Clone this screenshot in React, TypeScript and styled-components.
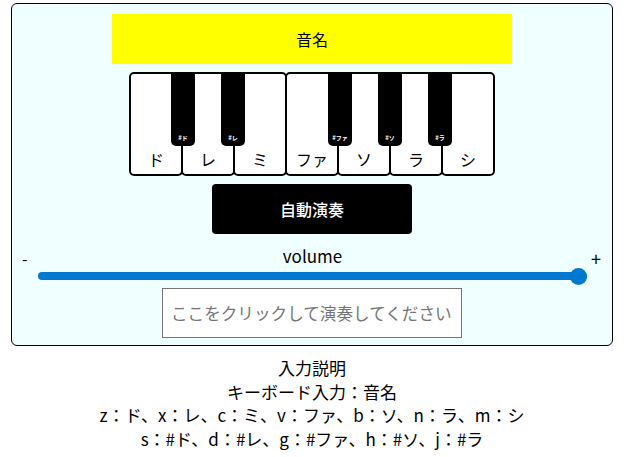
import React, { useState } from 'react'
import styled, { createGlobalStyle } from 'styled-components'

const GlobalStyle = createGlobalStyle`
  body {
    margin: 0;
    font-family: "Noto Sans CJK JP", "Noto Sans", sans-serif;
    color: #000;
    background: #fff;
  }
`

const Page = styled.div`
  padding: 3px 0 0 11px;
`

const Panel = styled.div`
  box-sizing: border-box;
  width: 602px;
  height: 343px;
  border: 1px solid #000;
  border-radius: 6px;
  background: #f0ffff;
  display: flex;
  flex-direction: column;
  align-items: center;
  padding-top: 10px;
`

const NoteName = styled.div`
  width: 400px;
  height: 50px;
  background: #ffff00;
  display: flex;
  align-items: center;
  justify-content: center;
  font-size: 16px;
`

const Keyboard = styled.div`
  position: relative;
  display: flex;
  margin-top: 8px;
  height: 104px;
`

const WhiteKey = styled.div`
  box-sizing: border-box;
  width: 54px;
  height: 104px;
  border: 2px solid #000;
  border-radius: 5px;
  background: #fff;
  display: flex;
  align-items: flex-end;
  justify-content: center;
  padding-bottom: 3px;
  font-size: 16px;
  & + & {
    margin-left: -2px;
  }
`

const BlackKey = styled.div<{ $left: number }>`
  position: absolute;
  top: 0;
  left: ${(p) => p.$left}px;
  width: 24px;
  height: 74px;
  background: #000;
  border-radius: 0 0 5px 5px;
  display: flex;
  align-items: flex-end;
  justify-content: center;
  padding-bottom: 4px;
  box-sizing: border-box;
  color: #fff;
  font-size: 6px;
  font-weight: bold;
`

const AutoButton = styled.button`
  margin-top: 8px;
  width: 200px;
  height: 50px;
  border: none;
  border-radius: 4px;
  background: #000;
  color: #fff;
  font-family: "Noto Sans CJK JP", sans-serif;
  font-size: 16px;
  font-weight: 500;
`

const VolumeRow = styled.div`
  align-self: stretch;
  margin-top: 10px;
  padding-left: 10px;
  display: flex;
  align-items: flex-start;
`

const Sign = styled.span<{ $plus?: boolean }>`
  width: ${(p) => (p.$plus ? 18 : 16)}px;
  margin-top: 4px;
  text-align: ${(p) => (p.$plus ? 'center' : 'left')};
  font-size: ${(p) => (p.$plus ? 18 : 16)}px;
  line-height: 20px;
`

const VolumeCol = styled.div`
  width: 549px;
  display: flex;
  flex-direction: column;
  align-items: center;
`

const VolumeLabel = styled.div`
  font-size: 17px;
  line-height: 24px;
`

const Range = styled.input`
  -webkit-appearance: none;
  appearance: none;
  width: 549px;
  height: 16px;
  margin: 0;
  background: transparent;
  &::-webkit-slider-runnable-track {
    height: 8px;
    border-radius: 4px;
    background: #0078d0;
  }
  &::-webkit-slider-thumb {
    -webkit-appearance: none;
    width: 17px;
    height: 17px;
    margin-top: -4.5px;
    border-radius: 50%;
    background: #0078d0;
    border: none;
  }
`

const PlayInput = styled.input`
  box-sizing: border-box;
  margin-top: 4px;
  width: 300px;
  height: 50px;
  border: 1px solid #767676;
  background: #fff;
  padding: 0 8px;
  font-family: "Noto Sans CJK JP", sans-serif;
  font-size: 16.6px;
  &::placeholder {
    color: #757575;
  }
`

const Help = styled.div`
  width: 602px;
  margin-top: 10px;
  text-align: center;
  font-size: 17px;
  line-height: 23.7px;
`

const whites = ['ド', 'レ', 'ミ', 'ファ', 'ソ', 'ラ', 'シ']
const blacks = [
  { label: '#ド', left: 42 },
  { label: '#レ', left: 92 },
  { label: '#ファ', left: 199 },
  { label: '#ソ', left: 249 },
  { label: '#ラ', left: 299 },
]

const App: React.FC = () => {
  const [volume, setVolume] = useState<number>(100)

  return (
    <Page>
      <GlobalStyle />
      <Panel>
        <NoteName>音名</NoteName>
        <Keyboard>
          {whites.map((w) => (
            <WhiteKey key={w}>{w}</WhiteKey>
          ))}
          {blacks.map((b) => (
            <BlackKey key={b.label} $left={b.left}>
              {b.label}
            </BlackKey>
          ))}
        </Keyboard>
        <AutoButton>自動演奏</AutoButton>
        <VolumeRow>
          <Sign>-</Sign>
          <VolumeCol>
            <VolumeLabel>volume</VolumeLabel>
            <Range
              type="range"
              min={0}
              max={100}
              value={volume}
              onChange={(e) => setVolume(Number(e.target.value))}
            />
          </VolumeCol>
          <Sign $plus>+</Sign>
        </VolumeRow>
        <PlayInput placeholder="ここをクリックして演奏してください" />
      </Panel>
      <Help>
        <div>入力説明</div>
        <div>キーボード入力：音名</div>
        <div>z：ド、x：レ、c：ミ、v：ファ、b：ソ、n：ラ、m：シ</div>
        <div>s：#ド、d：#レ、g：#ファ、h：#ソ、j：#ラ</div>
      </Help>
    </Page>
  )
}

export default App
